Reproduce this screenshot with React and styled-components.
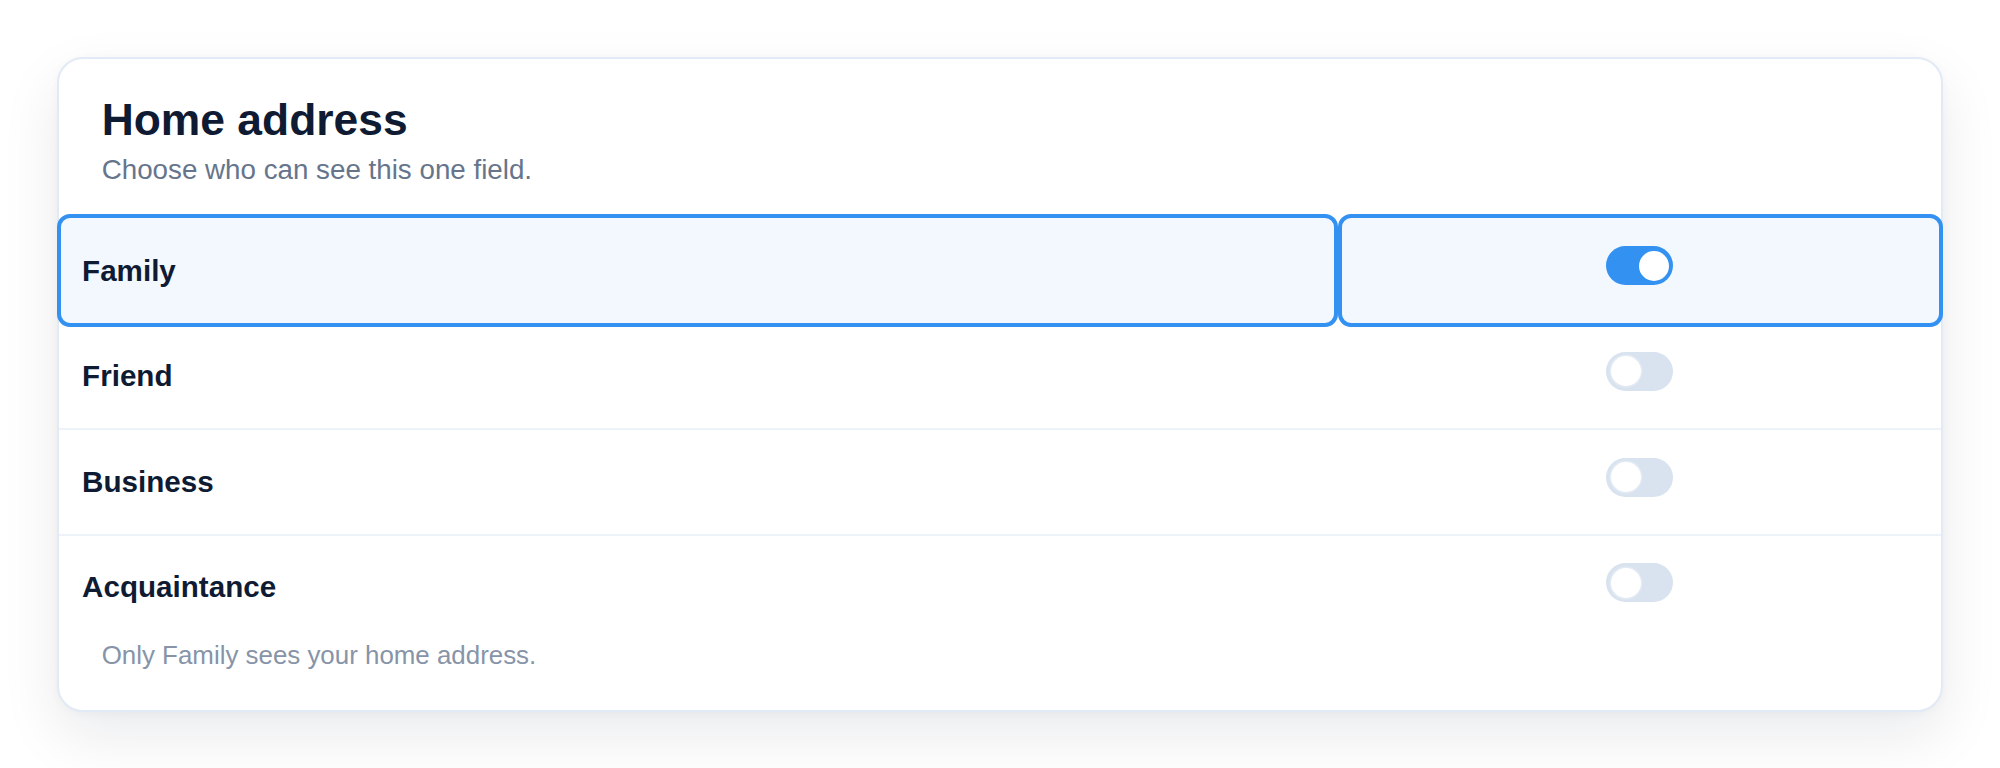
import React, { useState } from 'react'
import styled, { createGlobalStyle, css } from 'styled-components'

const GlobalStyle = createGlobalStyle`
  html, body {
    margin: 0;
    padding: 0;
    background: #ffffff;
  }
  body {
    font-family: 'Liberation Sans', Arial, sans-serif;
    -webkit-font-smoothing: antialiased;
  }
`

const Page = styled.main`
  padding: 56.7px 56.7px;
  box-sizing: border-box;
  width: 100%;
`

const Card = styled.section`
  background: #ffffff;
  border: 2px solid #e2eaf5;
  border-radius: 26px;
  box-shadow: 0 24px 60px rgba(15, 23, 42, 0.085), 0 2px 10px rgba(15, 23, 42, 0.035);
`

const Header = styled.header`
  padding: 33px 43px 31.5px;
`

const Title = styled.h2`
  margin: 0;
  font-size: 44.4px;
  line-height: 1.25;
  font-weight: 700;
  color: #0f1b33;
`

const Subtitle = styled.p`
  margin: 7px 0 0;
  font-size: 27.75px;
  line-height: 32px;
  color: #66758c;
`

const List = styled.div`
  display: flex;
  flex-direction: column;
`

const Row = styled.div`
  display: grid;
  grid-template-columns: 1fr 603.5px;
  border-bottom: 2px solid #eef3f9;
  &:last-child {
    border-bottom: none;
  }
  ${({ $active }) =>
    $active &&
    css`
      border-bottom-color: transparent;
    `}
`

const Cell = styled.div`
  position: relative;
  display: flex;
  padding: ${({ $active }) => ($active ? '30.9px' : '29.6px')} 23.4px 29.6px;
  ${({ $center, $active }) =>
    $center &&
    css`
      justify-content: center;
      align-items: flex-start;
      padding-top: ${$active ? '28.7px' : '27.4px'};
    `}
  ${({ $active }) =>
    $active &&
    css`
      background: #f3f8fe;
      border-radius: 13px;
      &::after {
        content: '';
        position: absolute;
        top: -4px;
        bottom: -4px;
        left: 0;
        right: 0;
        border: 4px solid #3391f2;
        border-radius: 13px;
        pointer-events: none;
      }
      &:first-child::after {
        left: -1.5px;
      }
      &:last-child::after {
        right: -1.5px;
      }
    `}
`

const Label = styled.span`
  font-size: 29.6px;
  line-height: 44.4px;
  font-weight: 700;
  color: #0f1b33;
`

const Track = styled.button`
  position: relative;
  width: 67px;
  height: 39px;
  padding: 0;
  border: none;
  border-radius: 999px;
  cursor: pointer;
  background: ${({ $on }) => ($on ? '#3391f2' : '#d8e3ef')};
  flex-shrink: 0;
`

const Knob = styled.span`
  position: absolute;
  top: 4.5px;
  left: ${({ $on }) => ($on ? '32.5px' : '4.5px')};
  width: 30px;
  height: 30px;
  border-radius: 50%;
  background: #ffffff;
  box-shadow: ${({ $on }) => ($on ? 'none' : '0 0 0 1.5px #e3eaf3')};
`

const Footer = styled.p`
  margin: 0;
  padding: 1.4px 43px 39.7px;
  font-size: 25.9px;
  line-height: 1.15;
  color: #8794a8;
`

const Toggle = ({ on, onClick, label }) => (
  <Track $on={on} onClick={onClick} role="switch" aria-checked={on} aria-label={label}>
    <Knob $on={on} />
  </Track>
)

const groups = ['Family', 'Friend', 'Business', 'Acquaintance']

const App = () => {
  const [visible, setVisible] = useState({ Family: true })
  const toggle = (name) => setVisible((v) => ({ ...v, [name]: !v[name] }))

  return (
    <>
      <GlobalStyle />
      <Page>
        <Card>
          <Header>
            <Title>Home address</Title>
            <Subtitle>Choose who can see this one field.</Subtitle>
          </Header>
          <List>
            {groups.map((name) => {
              const active = name === 'Family'
              return (
                <Row key={name} $active={active}>
                  <Cell $active={active}>
                    <Label>{name}</Label>
                  </Cell>
                  <Cell $active={active} $center>
                    <Toggle on={!!visible[name]} onClick={() => toggle(name)} label={name} />
                  </Cell>
                </Row>
              )
            })}
          </List>
          <Footer>Only Family sees your home address.</Footer>
        </Card>
      </Page>
    </>
  )
}

export default App
